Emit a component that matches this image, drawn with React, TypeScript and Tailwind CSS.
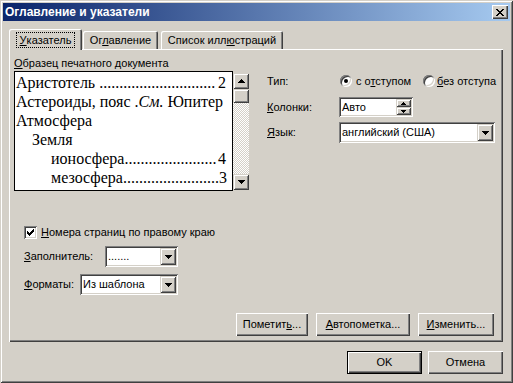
import React from "react";

const pushBtn =
  "shadow-[inset_1px_1px_#ffffff,inset_-1px_-1px_#404040,inset_-2px_-2px_#808080]";
const sbBtn =
  "shadow-[inset_1px_1px_#d4d0c8,inset_-1px_-1px_#404040,inset_2px_2px_#ffffff,inset_-2px_-2px_#808080]";
const sunken =
  "shadow-[inset_1px_1px_#808080,inset_-1px_-1px_#ffffff,inset_2px_2px_#404040,inset_-2px_-2px_#d4d0c8]";

function DownArrow() {
  return (
    <svg width="7" height="4" viewBox="0 0 7 4" shapeRendering="crispEdges">
      <path d="M0 0h7v1H0zM1 1h5v1H1zM2 2h3v1H2zM3 3h1v1H3z" fill="#000" />
    </svg>
  );
}
function UpArrow() {
  return (
    <svg width="7" height="4" viewBox="0 0 7 4" shapeRendering="crispEdges">
      <path d="M3 0h1v1H3zM2 1h3v1H2zM1 2h5v1H1zM0 3h7v1H0z" fill="#000" />
    </svg>
  );
}
function SmallUp() {
  return (
    <svg width="5" height="3" viewBox="0 0 5 3" shapeRendering="crispEdges">
      <path d="M2 0h1v1H2zM1 1h3v1H1zM0 2h5v1H0z" fill="#000" />
    </svg>
  );
}
function SmallDown() {
  return (
    <svg width="5" height="3" viewBox="0 0 5 3" shapeRendering="crispEdges">
      <path d="M0 0h5v1H0zM1 1h3v1H1zM2 2h1v1H2z" fill="#000" />
    </svg>
  );
}
function CloseX() {
  return (
    <svg width="8" height="7" viewBox="0 0 8 7" shapeRendering="crispEdges">
      <path
        d="M0 0h2v1H0zM6 0h2v1H6zM1 1h2v1H1zM5 1h2v1H5zM2 2h4v1H2zM3 3h2v1H3zM2 4h4v1H2zM1 5h2v1H1zM5 5h2v1H5zM0 6h2v1H0zM6 6h2v1H6z"
        fill="#000"
      />
    </svg>
  );
}
function Check() {
  return (
    <svg width="7" height="7" viewBox="0 0 7 7" shapeRendering="crispEdges">
      <path
        d="M6 0h1v1H6zM5 1h2v1H5zM0 2h1v1H0zM4 2h3v1H4zM0 3h2v1H0zM3 3h3v1H3zM0 4h5v1H0zM1 5h3v1H1zM2 6h1v1H2z"
        fill="#000"
      />
    </svg>
  );
}

function Radio({ on }: { on?: boolean }) {
  return (
    <div
      className={`w-[12px] h-[12px] rounded-full bg-white flex items-center justify-center shrink-0 ${sunken}`}
    >
      {on && <div className="w-[4px] h-[4px] rounded-full bg-black" />}
    </div>
  );
}

function Select({ w, value }: { w: string; value: string }) {
  return (
    <div className={`${w} h-[21px] bg-white p-[2px] flex items-stretch ${sunken}`}>
      <div className="flex-1 flex items-center pl-[1px] whitespace-nowrap overflow-hidden">
        {value}
      </div>
      <div className={`w-[16px] bg-[#d4d0c8] flex items-center justify-center ${sbBtn}`}>
        <DownArrow />
      </div>
    </div>
  );
}

function Button({ w, children, def }: { w: string; children: React.ReactNode; def?: boolean }) {
  if (def) {
    return (
      <div className={`${w} h-[23px] border border-black`}>
        <div className={`w-full h-full flex items-center justify-center ${pushBtn}`}>{children}</div>
      </div>
    );
  }
  return (
    <div className={`${w} h-[23px] flex items-center justify-center ${pushBtn}`}>{children}</div>
  );
}

function Leader({ indent, name, page, dots }: { indent: string; name: string; page: string; dots: number }) {
  return (
    <div className={`flex h-[19px] items-center whitespace-nowrap ${indent}`}>
      <span>{name}</span>
      <span>{".".repeat(dots)}</span>
      <span className="ml-auto">{page}</span>
    </div>
  );
}

export default function App() {
  return (
    <div className="w-[513px] h-[383px] bg-[#d4d0c8] p-[3px] font-['Liberation_Sans',Arial,sans-serif] text-[11px] leading-[13px] text-black overflow-hidden shadow-[inset_1px_1px_#d4d0c8,inset_-1px_-1px_#404040,inset_2px_2px_#ffffff,inset_-2px_-2px_#808080]">
      {/* Title bar */}
      <div className="h-[18px] flex items-center justify-between bg-[linear-gradient(to_right,#0a246a,#a6caf0)] pl-[2px] pr-[2px]">
        <span className="text-white font-bold text-[12px]">Оглавление и указатели</span>
        <div className={`w-[16px] h-[14px] bg-[#d4d0c8] flex items-center justify-center ${pushBtn}`}>
          <CloseX />
        </div>
      </div>

      <div className="pl-[6px] pt-[8px]">
        {/* Tabs */}
        <div className="h-[20px] flex items-end relative z-10">
          <div className="w-[73px] h-[21px] -mb-[1px] bg-[#d4d0c8] flex justify-center pt-[3px] rounded-t-[2px] shadow-[inset_1px_1px_#ffffff,inset_-1px_0_#404040,inset_-2px_0_#808080]">
            <span className="h-[16px] px-[3px] border border-dotted border-black flex items-center">
              <span className="underline">У</span>казатель
            </span>
          </div>
          <div className="ml-[1px] w-[75px] h-[18px] bg-[#d4d0c8] flex justify-center items-center pt-[1px] rounded-t-[2px] shadow-[inset_1px_1px_#ffffff,inset_-1px_0_#404040,inset_-2px_0_#808080]">
            <span>
              Ог<span className="underline">л</span>авление
            </span>
          </div>
          <div className="ml-[3px] w-[122px] h-[18px] bg-[#d4d0c8] flex justify-center items-center pt-[1px] rounded-t-[2px] shadow-[inset_1px_1px_#ffffff,inset_-1px_0_#404040,inset_-2px_0_#808080]">
            <span>
              Список илл<span className="underline">ю</span>страций
            </span>
          </div>
        </div>

        {/* Panel */}
        <div className="w-[494px] h-[293px] pl-[5px] pt-[8px] shadow-[inset_1px_1px_#ffffff,inset_-1px_-1px_#404040,inset_-2px_-2px_#808080]">
          <div className="flex">
            {/* Preview */}
            <div className="w-[236px]">
              <div className="h-[13px] whitespace-nowrap">
                <span className="underline">О</span>бразец печатного документа
              </div>
              <div className="mt-[1px] flex">
                <div className="w-[219px] h-[120px] bg-white border border-black pl-[1px] pr-[6px] pt-[1px] font-['Liberation_Serif','Times_New_Roman',serif] text-[16px] leading-[19px] overflow-hidden">
                  <Leader indent="" name={"Аристотель\u00a0"} page="2" dots={29} />
                  <div className="h-[19px] flex items-center whitespace-nowrap">
                    Астероиды, пояс .<i>См.</i>&nbsp;Юпитер
                  </div>
                  <div className="h-[19px] flex items-center">Атмосфера</div>
                  <div className="h-[19px] flex items-center pl-[16px]">Земля</div>
                  <Leader indent="pl-[35px]" name="ионосфера" page="4" dots={23} />
                  <Leader indent="pl-[35px]" name="мезосфера" page="3" dots={24} />
                </div>
                <div className="w-[16px] h-[117px] mt-[2px] flex flex-col bg-[repeating-conic-gradient(#d4d0c8_0%_25%,#ffffff_0%_50%)] bg-[length:2px_2px]">
                  <div className={`h-[16px] bg-[#d4d0c8] flex items-center justify-center ${sbBtn}`}>
                    <UpArrow />
                  </div>
                  <div className={`h-[14px] bg-[#d4d0c8] ${sbBtn}`} />
                  <div className="flex-1" />
                  <div className={`h-[16px] bg-[#d4d0c8] flex items-center justify-center ${sbBtn}`}>
                    <DownArrow />
                  </div>
                </div>
              </div>
            </div>

            {/* Right controls */}
            <div className="ml-[17px] pt-[16px]">
              <div className="h-[16px] flex items-center">
                <div className="w-[73px]">Тип:</div>
                <div className="w-[83px] flex items-center gap-[4px]">
                  <Radio on />
                  <span className="whitespace-nowrap">
                    с о<span className="underline">т</span>ступом
                  </span>
                </div>
                <div className="flex items-center gap-[2px]">
                  <Radio />
                  <span className="whitespace-nowrap">
                    <span className="underline">б</span>ез отступа
                  </span>
                </div>
              </div>
              <div className="mt-[8px] h-[20px] flex items-center">
                <div className="w-[72px]">
                  <span className="underline">К</span>олонки:
                </div>
                <div className={`w-[74px] h-[20px] bg-white p-[2px] flex ${sunken}`}>
                  <div className="flex-1 flex items-center pl-[1px]">Авто</div>
                  <div className="w-[15px] flex flex-col">
                    <div className={`h-[8px] bg-[#d4d0c8] flex items-center justify-center ${sbBtn}`}>
                      <SmallUp />
                    </div>
                    <div className={`h-[8px] bg-[#d4d0c8] flex items-center justify-center ${sbBtn}`}>
                      <SmallDown />
                    </div>
                  </div>
                </div>
              </div>
              <div className="mt-[5px] h-[21px] flex items-center">
                <div className="w-[72px]">
                  <span className="underline">Я</span>зык:
                </div>
                <Select w="w-[156px]" value="английский (США)" />
              </div>
            </div>
          </div>

          {/* Lower left */}
          <div className="ml-[10px] mt-[35px]">
            <div className="h-[13px] flex items-center gap-[4px]">
              <div className={`w-[13px] h-[13px] bg-white flex items-center justify-center ${sunken}`}>
                <Check />
              </div>
              <span className="whitespace-nowrap">
                <span className="underline">Н</span>омера страниц по правому краю
              </span>
            </div>
            <div className="mt-[7px] h-[21px] flex items-center">
              <div className="w-[81px]">
                <span className="underline">З</span>аполнитель:
              </div>
              <Select w="w-[73px]" value="......." />
            </div>
            <div className="mt-[7px] h-[21px] flex items-center">
              <div className="w-[56px]">
                <span className="underline">Ф</span>орматы:
              </div>
              <Select w="w-[98px]" value="Из шаблона" />
            </div>
          </div>

          <div className="mt-[18px] h-[23px] flex justify-end gap-[8px] pr-[9px]">
            <Button w="w-[72px]">
              Пометит<span className="underline">ь</span>...
            </Button>
            <Button w="w-[94px]">
              <span className="underline">А</span>втопометка...
            </Button>
            <Button w="w-[76px]">
              <span className="underline">И</span>зменить...
            </Button>
          </div>
        </div>

        {/* Dialog buttons */}
        <div className="w-[494px] mt-[9px] flex justify-end gap-[6px]">
          <Button w="w-[75px]" def>
            OK
          </Button>
          <Button w="w-[75px]">Отмена</Button>
        </div>
      </div>
    </div>
  );
}
